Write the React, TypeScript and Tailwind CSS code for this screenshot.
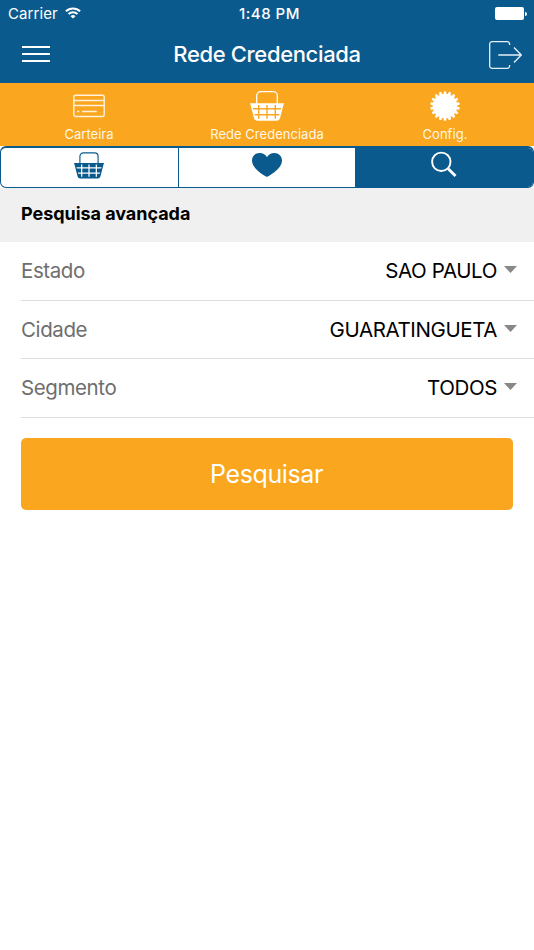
import React from 'react';

const Basket = ({ className }: { className: string }) => (
  <svg className={className} viewBox="0 0 34 30" fill="none">
    <path d="M6.7 13V4.7a4 4 0 0 1 4-4h12.6a4 4 0 0 1 4 4V13" stroke="currentColor" strokeWidth="1.3" />
    <path
      fill="currentColor"
      fillRule="evenodd"
      d="M0 12.3h34l-.7 2.2-3.3 12.7a3.2 3.2 0 0 1-3.1 2.5H7.1A3.2 3.2 0 0 1 4 27.2L.7 14.5z
        M2.8 17h28.4l-.4 1.4H3.2z
        M4.4 23h25.2l-.4 1.4H4.8z
        M8 14h1.4v3H8zM8 18.4h1.4V23H8zM8 24.4h1.4v3.4H8z
        M16.3 14h1.4v3h-1.4zM16.3 18.4h1.4V23h-1.4zM16.3 24.4h1.4v3.4h-1.4z
        M24.6 14h1.4v3h-1.4zM24.6 18.4h1.4V23h-1.4zM24.6 24.4h1.4v3.4h-1.4z"
    />
  </svg>
);

const Gear = () => (
  <svg className="w-[30px] h-[30px]" viewBox="-15 -15 30 30" fill="white">
    <circle r="12.3" />
    {Array.from({ length: 18 }, (_, i) => (
      <rect key={i} x="-1.35" y="-14.8" width="2.7" height="4" rx="0.9" transform={`rotate(${i * 20})`} />
    ))}
  </svg>
);

const tabs = [
  {
    label: 'Carteira',
    icon: (
      <svg className="w-8 h-[30px]" viewBox="0 0 32 30" fill="none" stroke="#fff3dc" strokeWidth="1.4">
        <rect x="0.8" y="4.3" width="30.4" height="21.2" rx="2" />
        <path d="M1 9.5h30M1 14.5h30M4 20.5h2.3M9 20.5h14.7" />
      </svg>
    ),
  },
  { label: 'Rede Credenciada', icon: <Basket className="w-[34px] h-[30px]" /> },
  { label: 'Config.', icon: <Gear /> },
];

const fields = [
  { label: 'Estado', value: 'SAO PAULO' },
  { label: 'Cidade', value: 'GUARATINGUETA' },
  { label: 'Segmento', value: 'TODOS' },
];

const StatusBar = () => (
  <div className="grid grid-cols-3 items-center h-7 pl-2 pr-[7px] text-[15px]">
    <div className="flex items-center gap-[7px] tracking-[0.1px]">
      Carrier
      <svg className="w-4 h-3 mb-[2px]" viewBox="0 0 16 12" fill="none" stroke="white" strokeWidth="2">
        <path d="M.9 4.3a10.2 10.2 0 0 1 14.2 0M3.5 7a6.5 6.5 0 0 1 9 0" />
        <path d="M8 11.6 5.5 9.2a3.6 3.6 0 0 1 5 0z" fill="white" stroke="none" />
      </svg>
    </div>
    <div className="pl-1 text-center font-medium tracking-[0.5px]">1:48 PM</div>
    <div className="flex items-center justify-end gap-px mb-px">
      <div className="w-[29px] h-[13px] rounded-[2px] bg-white" />
      <div className="w-[2px] h-1 rounded-r-full bg-white" />
    </div>
  </div>
);

const App = () => {
  return (
    <div className="min-h-[950px] bg-white font-['Inter',sans-serif] text-black">
      <header className="h-[83px] bg-[#0b5a8d] text-white">
        <StatusBar />
        <div className="grid grid-cols-[1fr_auto_1fr] items-center h-[52px] px-[22px]">
          <button className="flex flex-col gap-[5px] w-[34px]">
            <span className="w-7 h-[2px] bg-white" />
            <span className="w-7 h-[2px] bg-white" />
            <span className="w-7 h-[2px] bg-white" />
          </button>
          <h1 className="text-[22px] font-medium tracking-[-0.35px]">Rede Credenciada</h1>
          <svg
            className="justify-self-end -mr-[10px] mt-[2px] w-[34px] h-7"
            viewBox="0 0 34 28"
            fill="none"
            stroke="#e6f0f6"
            strokeWidth="1.3"
          >
            <path d="M21.6 4V3a2.3 2.3 0 0 0-2.3-2.3H4A2.3 2.3 0 0 0 1.7 3v22A2.3 2.3 0 0 0 4 27.3h15.3a2.3 2.3 0 0 0 2.3-2.3v-1" />
            <path d="M10.3 14H33M26 6.5l7.3 7.5-7.3 7.5" />
          </svg>
        </div>
      </header>

      <nav className="grid grid-cols-3 h-[63px] bg-[#faa61e] text-white">
        {tabs.map(({ label, icon }) => (
          <div key={label} className="flex flex-col items-center pt-2">
            {icon}
            <span className="mt-1 leading-[18px] text-[13px] tracking-[0.03px] text-[#fff6e6]">{label}</span>
          </div>
        ))}
      </nav>

      <div className="grid grid-cols-[178px_176px_1fr] h-[42px] border border-t-2 border-[#0b5a8d] rounded-md overflow-hidden text-[#0b5a8d]">
        <div className="flex justify-center pt-[3.5px] pr-px border-r border-[#0b5a8d]">
          <Basket className="w-[30px] h-[27px]" />
        </div>
        <div className="flex justify-center pt-[5px]">
          <svg className="w-[30px] h-6" viewBox="0 0 30 24" fill="currentColor">
            <path d="M15 24C12.5 22.7 0 16 0 7.6 0 3.2 3.3 0 7.7 0 11 0 13.800 1.800 15 4.200 16.200 1.800 19 0 22.300 0 26.700 0 30 3.200 30 7.600 30 16 17.500 22.700 15 24z" />
          </svg>
        </div>
        <div className="flex justify-center pt-[3px] bg-[#0b5a8d]">
          <svg className="w-[26px] h-[27px]" viewBox="0 0 26 27" fill="none" stroke="white">
            <circle cx="10.3" cy="10.8" r="9.2" strokeWidth="1.9" />
            <path d="M17.2 17.7l7.3 7.3" strokeWidth="2.8" />
          </svg>
        </div>
      </div>

      <h2 className="h-[54px] pl-[21px] bg-[#f0f0f0] text-[18px] leading-[52px] font-bold tracking-[-0.04px]">
        Pesquisa avançada
      </h2>

      <div className="pl-[21px]">
        {fields.map(({ label, value }) => (
          <div
            key={label}
            className="flex items-center h-[58.5px] pr-[17px] border-b border-[#dedede] text-[20.5px] tracking-[-0.4px]"
          >
            <span className="pt-[2px] text-[#6e6e6e]">{label}</span>
            <span className="ml-auto pt-[2px]">{value}</span>
            <svg className="ml-[7px] mb-[2px] w-[13px] h-[7px]" viewBox="0 0 13 7" fill="#888888">
              <path d="M0 0h13L6.5 7z" />
            </svg>
          </div>
        ))}
      </div>

      <div className="px-[21px] pt-5">
        <button className="w-full h-[72px] pt-[2px] pr-px rounded-[5px] bg-[#faa61e] text-white text-[25px] tracking-[-0.4px]">
          Pesquisar
        </button>
      </div>
    </div>
  );
};

export default App;
